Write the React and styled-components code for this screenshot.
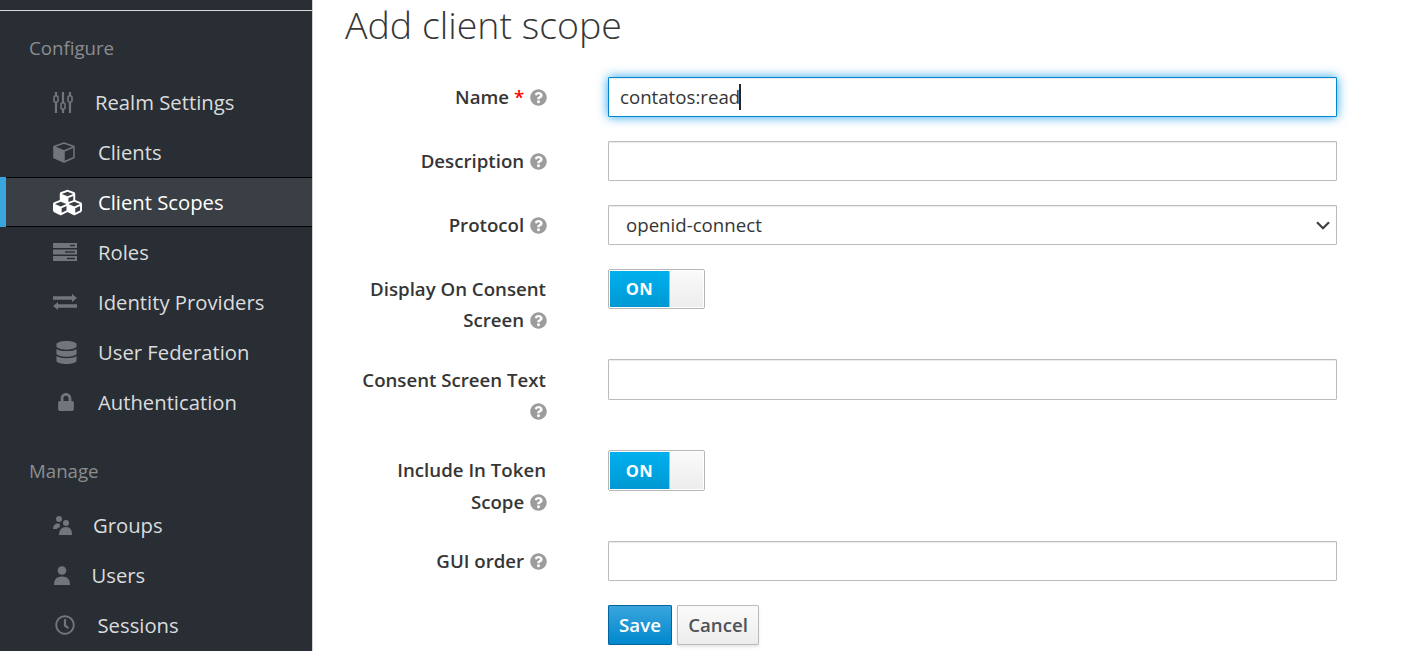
import styled, { createGlobalStyle } from 'styled-components';
import { FaCubes, FaDatabase, FaLock, FaRegClock, FaQuestionCircle } from 'react-icons/fa';

const Global = createGlobalStyle`
  html, body { margin: 0; padding: 0; background: #fff; overflow: hidden; }
  * { box-sizing: border-box; }
  body { font-family: "Open Sans", "Liberation Sans", sans-serif; font-size: 18.67px; color: #363636; }
`;

function SlidersIcon() {
  return (
    <svg width="20" height="21" viewBox="0 0 20 21" fill="none" stroke="#72767b">
      <path d="M3 0v4M3 10v11M10 0v11M10 17v4M17 0v4M17 10v11" strokeWidth="2.200" />
      <rect x="1" y="4" width="4" height="6" rx="1" strokeWidth="1.600" />
      <rect x="8" y="11" width="4" height="6" rx="1" strokeWidth="1.600" />
      <rect x="15" y="4" width="4" height="6" rx="1" strokeWidth="1.600" />
    </svg>
  );
}

function CubeIcon() {
  return (
    <svg width="22" height="21" viewBox="0 0 22 21" fill="none" stroke="#72767b" strokeWidth="1.500" strokeLinejoin="round">
      <path d="M11 1l10 3.500v11L11 20 1 15.500v-11z" />
      <path d="M1.500 5l9.500 4v10.500L1.500 15.500z" fill="#72767b" />
      <path d="M11 9l9.500-4" />
    </svg>
  );
}

function ServerIcon() {
  return (
    <svg width="24" height="18" viewBox="0 0 24 18" fill="#72767b">
      <rect x="0" y="0" width="24" height="5" />
      <rect x="0" y="6.500" width="24" height="5" />
      <rect x="0" y="13" width="24" height="5" />
      <rect x="17" y="1.800" width="5" height="1.400" fill="#292e34" />
      <rect x="12" y="8.300" width="10" height="1.400" fill="#292e34" />
      <rect x="14" y="14.800" width="8" height="1.400" fill="#292e34" />
    </svg>
  );
}

function ExchangeIcon() {
  return (
    <svg width="24" height="16" viewBox="0 0 24 16" fill="#72767b">
      <path d="M0 2.300h19V0l5 4-5 4V5.700H0z" />
      <path d="M24 10.300H5V8l-5 4 5 4v-2.300h19z" />
    </svg>
  );
}

function GroupsIcon() {
  return (
    <svg width="19" height="19" viewBox="0 0 19 19" fill="#72767b">
      <circle cx="6" cy="3" r="3" />
      <circle cx="13" cy="7" r="3" />
      <path d="M0 13c0-3 1.500-5.500 5-5.500 1 0 1.500.2 2 .5-.5 1-.5 2 0 3-1.500.5-2.500 1-3 2z" />
      <path d="M6 19c0-5 2.500-8 7-8s6 3 6 8z" />
    </svg>
  );
}

function PersonIcon() {
  return (
    <svg width="16" height="19" viewBox="0 0 16 19" fill="#72767b">
      <circle cx="8" cy="4.500" r="4.300" />
      <path d="M0 19c0-5 2-8.500 8-8.500s8 3.500 8 8.500z" />
    </svg>
  );
}

const menus = [
  {
    title: 'Configure',
    items: [
      { name: 'Realm Settings', icon: <SlidersIcon />, iconX: 53, textX: 95 },
      { name: 'Clients', icon: <CubeIcon />, iconX: 53, textX: 98 },
      { name: 'Client Scopes', icon: <FaCubes size={29} />, iconX: 53, textX: 98, active: true },
      { name: 'Roles', icon: <ServerIcon />, iconX: 53, textX: 98 },
      { name: 'Identity Providers', icon: <ExchangeIcon />, iconX: 53, textX: 98 },
      { name: 'User Federation', icon: <FaDatabase size={23} />, iconX: 54.500, textX: 98 },
      { name: 'Authentication', icon: <FaLock size={18} />, iconX: 57, textX: 98 },
    ],
  },
  {
    title: 'Manage',
    items: [
      { name: 'Groups', icon: <GroupsIcon />, iconX: 53, textX: 93 },
      { name: 'Users', icon: <PersonIcon />, iconX: 54, textX: 91.500 },
      { name: 'Sessions', icon: <FaRegClock size={20} />, iconX: 55, textX: 97.500 },
    ],
  },
];

function Help() {
  return <HelpIcon><FaQuestionCircle size={17} /></HelpIcon>;
}

function Toggle() {
  return (
    <Switch>
      <SwitchOn>ON</SwitchOn>
      <SwitchKnob />
    </Switch>
  );
}

export default function App() {
  return (
    <Page>
      <Global />
      <Sidebar>
        <TopRule />
        {menus.map((menu) => (
          <Section key={menu.title}>
            <SectionTitle>{menu.title}</SectionTitle>
            {menu.items.map((item) => (
              <MenuItem key={item.name} $active={item.active}>
                <MenuIcon $x={item.iconX} $active={item.active}>{item.icon}</MenuIcon>
                <MenuText $x={item.textX - item.iconX}>{item.name}</MenuText>
              </MenuItem>
            ))}
          </Section>
        ))}
      </Sidebar>
      <Main>
        <Title>Add client scope</Title>
        <Row>
          <Label>Name <Required>*</Required> <Help /></Label>
          <FocusField>contatos:read<Caret /></FocusField>
        </Row>
        <Row>
          <Label>Description <Help /></Label>
          <Field readOnly />
        </Row>
        <Row>
          <Label>Protocol <Help /></Label>
          <SelectWrap>
            <Select defaultValue="openid-connect">
              <option>openid-connect</option>
            </Select>
            <Chevron width="14" height="9" viewBox="0 0 14 9" fill="none" stroke="#3f3f3f" strokeWidth="2.200">
              <path d="M1 1.200l6 6 6-6" />
            </Chevron>
          </SelectWrap>
        </Row>
        <Row>
          <Label>Display On Consent Screen <Help /></Label>
          <Toggle />
        </Row>
        <Row>
          <Label>Consent Screen Text <Help /></Label>
          <Field readOnly />
        </Row>
        <Row>
          <Label>Include In Token Scope <Help /></Label>
          <Toggle />
        </Row>
        <Row>
          <Label>GUI order <Help /></Label>
          <Field readOnly />
        </Row>
        <Actions>
          <SaveButton>Save</SaveButton>
          <CancelButton>Cancel</CancelButton>
        </Actions>
      </Main>
    </Page>
  );
}

const Page = styled.div`
  display: flex;
  width: 1405px;
  height: 651px;
  overflow: hidden;
`;

const Sidebar = styled.aside`
  width: 313px;
  height: 651px;
  flex: none;
  background: #292e34;
  border-right: 1px solid #d1d1d1;
  padding-top: 10px;
`;

const TopRule = styled.div`
  height: 1px;
  background: #d8d8d8;
`;

const Section = styled.section`
  padding-top: 23px;
  margin-bottom: 7px;
`;

const SectionTitle = styled.div`
  height: 27px;
  line-height: 27px;
  padding-left: 29px;
  font-size: 18.67px;
  color: #8b8d8f;
  margin-bottom: 16px;
`;

const MenuItem = styled.div`
  display: flex;
  align-items: center;
  height: 50px;
  color: ${(p) => (p.$active ? '#fff' : '#dbdcdd')};
  background: ${(p) => (p.$active ? '#393f44' : 'transparent')};
  box-shadow: ${(p) => (p.$active ? 'inset 6px 0 0 #39a5dc, inset 0 1px 0 #030303, inset 0 -1px 0 #030303' : 'none')};
`;

const MenuIcon = styled.span`
  display: flex;
  align-items: center;
  width: 0;
  margin-left: ${(p) => p.$x}px;
  overflow: visible;
  color: ${(p) => (p.$active ? '#fff' : '#72767b')};
  svg { flex: none; }
`;

const MenuText = styled.span`
  margin-left: ${(p) => p.$x}px;
  font-size: 20.25px;
  line-height: 27px;
`;

const Main = styled.main`
  flex: 1;
  padding: 0 68px 0 32px;
`;

const Title = styled.h1`
  margin: 0 0 26.6px;
  height: 50px;
  line-height: 50px;
  font-size: 37.5px;
  font-weight: 300;
  color: #363636;
`;

const Row = styled.div`
  display: flex;
  align-items: flex-start;
  margin-bottom: 23.33px;
  min-height: 40.67px;
`;

const Label = styled.label`
  width: 201px;
  flex: none;
  margin: 0 62px 0.08px 0;
  padding-top: 4.6px;
  text-align: right;
  font-weight: 600;
  line-height: 31.33px;
  color: #363636;
`;

const Required = styled.span`
  color: #f00;
`;

const HelpIcon = styled.span`
  color: #9c9c9c;
  svg {
    vertical-align: -2px;
    margin-left: 1px;
    margin-right: -1px;
  }
`;

const Field = styled.input`
  display: block;
  width: 729px;
  height: 40.67px;
  padding: 0 12px;
  border: 1px solid #bbb;
  border-radius: 1px;
  background: #fff;
  box-shadow: inset 0 1px 1px rgba(3, 3, 3, 0.08);
  font: inherit;
  color: #363636;
  outline: none;
`;

const FocusField = styled.div`
  display: flex;
  align-items: center;
  width: 729px;
  height: 40.67px;
  padding: 0 11px;
  border: 1px solid #0088ce;
  border-radius: 1px;
  background: #fff;
  box-shadow: inset 0 1px 1px rgba(3, 3, 3, 0.08), 0 0 11px rgba(0, 145, 230, 0.85);
  font-weight: 400;
  color: #363636;
`;

const Caret = styled.span`
  width: 2px;
  height: 26px;
  margin-left: -1px;
  background: #22262e;
`;

const SelectWrap = styled.div`
  position: relative;
  width: 729px;
  height: 40.67px;
`;

const Select = styled.select`
  display: block;
  width: 100%;
  height: 100%;
  padding: 0 12px 0 17px;
  border: 1px solid #bbb;
  border-radius: 1px;
  background: #fff;
  box-shadow: inset 0 1px 1px rgba(3, 3, 3, 0.08);
  appearance: none;
  font: inherit;
  color: #363636;
  outline: none;
`;

const Chevron = styled.svg`
  position: absolute;
  top: 16px;
  right: 7px;
`;

const Switch = styled.div`
  display: flex;
  width: 97px;
  height: 40.67px;
  padding: 1px;
  border: 1px solid #b7b7b7;
  border-radius: 2px;
  background: #fff;
`;

const SwitchOn = styled.div`
  width: 59px;
  display: flex;
  align-items: center;
  justify-content: center;
  background: linear-gradient(to bottom, #00b0ee, #0099d3);
  color: #fff;
  font-size: 16.5px;
  font-weight: 700;
  letter-spacing: 0.5px;
`;

const SwitchKnob = styled.div`
  flex: 1;
  border-left: 1px solid #bbb;
  background: linear-gradient(to bottom, #fafafa, #ededed);
`;

const Actions = styled.div`
  display: flex;
  gap: 5px;
  padding-left: 263px;
`;

const SaveButton = styled.button`
  height: 40.67px;
  width: 64px;
  padding: 0;
  border: 1px solid #00659c;
  border-radius: 1px;
  background: linear-gradient(to bottom, #39a5dc, #0088ce);
  color: #fff;
  font: inherit;
  font-weight: 600;
`;

const CancelButton = styled.button`
  height: 40.67px;
  width: 82px;
  padding: 0;
  border: 1px solid #bbb;
  border-radius: 1px;
  background: linear-gradient(to bottom, #fafafa, #ededed);
  box-shadow: 0 2px 3px rgba(3, 3, 3, 0.1);
  color: #4d5258;
  font: inherit;
  font-weight: 600;
`;
